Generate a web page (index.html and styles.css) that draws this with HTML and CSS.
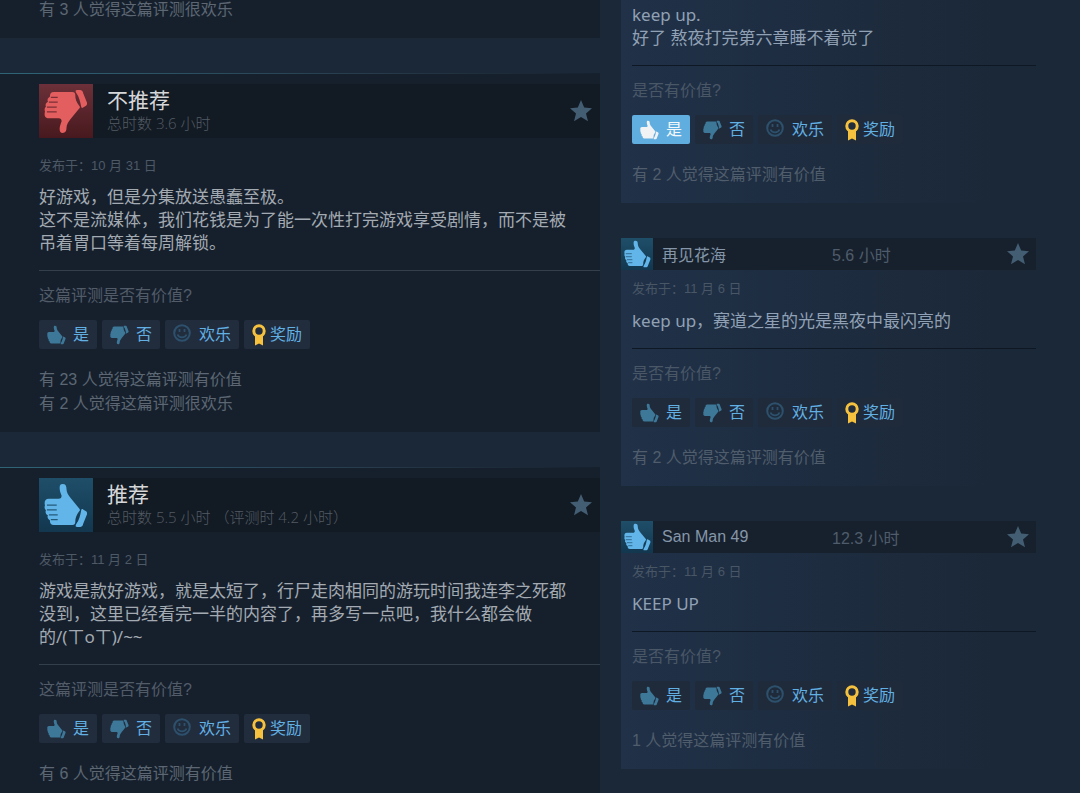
FILE: index.html
```html
<!DOCTYPE html>
<html lang="zh-CN">
<head>
  <meta charset="UTF-8" />
  <title>评测</title>
  <meta name="viewport" content="width=device-width, initial-scale=1" />
  <link rel="stylesheet" href="styles.css">
</head>
<body>

<!-- Shared icons -->
<svg class="sprite" aria-hidden="true">
  <symbol id="thumb" viewBox="4 4 45 46">
    <path d="M20 9c0-3 1-4 3-4 3 0 4 2 4 5 0 4 2 6 4 9l9 11c1 1 1 2 0 3-3 4-4 7-4 11 0 2-1 3-3 3H14c-3 0-4-2-4-5-2-1-3-3-2-5-2-1-3-3-2-5-1-1-2-3-1-5-1-4 0-7 4-7h10c2 0 3-1 3-3-1-3-2-5-2-8z"/>
    <path d="M42 32c0-1 1-2 2-1l3 2c1 1 1 1 1 3l-4 10c0 2-2 3-3 3h-3c-2 0-2-1-1-3 3-4 4-9 5-14z"/>
    <path class="fingers" d="M7 26.500h10M7 31.500h10M9 36.500h9M11 41.500h7"/>
  </symbol>
  <symbol id="smile" viewBox="0 0 18 18">
    <circle cx="9" cy="9" r="7.800" fill="none" stroke="currentColor" stroke-width="2"/>
    <path d="M6.500 5v3M11.500 5v3M4.500 10.500c1.500 3.800 7.500 3.800 9 0" fill="none" stroke="currentColor" stroke-width="1.800"/>
  </symbol>
  <symbol id="award" viewBox="0 0 14 22">
    <path d="M3 12h8v9.500l-4-2-4 2z" fill="currentColor"/>
    <circle class="hole" cx="7" cy="7" r="5.200" stroke="currentColor" stroke-width="3"/>
  </symbol>
  <symbol id="star" viewBox="0 0 22 22">
    <path d="M11 0l3.200 7.600 7.800.6-6 5.200 2 7.800-7-4.200-7 4.200 2-7.800-6-5.200 7.800-.6z"/>
  </symbol>
</svg>

<main class="page">
  <section class="main-col">
    <article class="review review-cut">
      <p class="counts">有 3 人觉得这篇评测很欢乐</p>
    </article>

    <article class="review">
      <header class="review-head">
        <span class="rating rating-down"><svg class="flip"><use href="#thumb"/></svg></span>
        <div class="verdict">
          <h2>不推荐</h2>
          <p class="hours">总时数 3.6 小时</p>
        </div>
        <button class="star" aria-label="收藏"><svg><use href="#star"/></svg></button>
      </header>
      <p class="date">发布于：10 月 31 日</p>
      <p class="content">好游戏，但是分集放送愚蠢至极。<br>这不是流媒体，我们花钱是为了能一次性打完游戏享受剧情，而不是被吊着胃口等着每周解锁。</p>
      <p class="question">这篇评测是否有价值?</p>
      <div class="controls">
        <button class="vote"><svg class="icon-thumb"><use href="#thumb"/></svg>是</button>
        <button class="vote"><svg class="icon-thumb flip"><use href="#thumb"/></svg>否</button>
        <button class="vote funny"><svg class="icon-smile"><use href="#smile"/></svg>欢乐</button>
        <button class="vote award"><svg class="icon-award"><use href="#award"/></svg>奖励</button>
      </div>
      <p class="counts">有 23 人觉得这篇评测有价值<br>有 2 人觉得这篇评测很欢乐</p>
    </article>

    <article class="review">
      <header class="review-head">
        <span class="rating"><svg><use href="#thumb"/></svg></span>
        <div class="verdict">
          <h2>推荐</h2>
          <p class="hours">总时数 5.5 小时 （评测时 4.2 小时）</p>
        </div>
        <button class="star" aria-label="收藏"><svg><use href="#star"/></svg></button>
      </header>
      <p class="date">发布于：11 月 2 日</p>
      <p class="content">游戏是款好游戏，就是太短了，行尸走肉相同的游玩时间我连李之死都没到，这里已经看完一半的内容了，再多写一点吧，我什么都会做<span class="kaomoji">的/(ㄒoㄒ)/~~</span></p>
      <p class="question">这篇评测是否有价值?</p>
      <div class="controls">
        <button class="vote"><svg class="icon-thumb"><use href="#thumb"/></svg>是</button>
        <button class="vote"><svg class="icon-thumb flip"><use href="#thumb"/></svg>否</button>
        <button class="vote funny"><svg class="icon-smile"><use href="#smile"/></svg>欢乐</button>
        <button class="vote award"><svg class="icon-award"><use href="#award"/></svg>奖励</button>
      </div>
      <p class="counts">有 6 人觉得这篇评测有价值</p>
    </article>
  </section>

  <aside class="recent">
    <article class="short short-cut">
      <p class="content">keep up.<br>好了 熬夜打完第六章睡不着觉了</p>
      <p class="question">是否有价值?</p>
      <div class="controls">
        <button class="vote active"><svg class="icon-thumb"><use href="#thumb"/></svg>是</button>
        <button class="vote"><svg class="icon-thumb flip"><use href="#thumb"/></svg>否</button>
        <button class="vote funny"><svg class="icon-smile"><use href="#smile"/></svg>欢乐</button>
        <button class="vote award"><svg class="icon-award"><use href="#award"/></svg>奖励</button>
      </div>
      <p class="counts">有 2 人觉得这篇评测有价值</p>
    </article>

    <article class="short">
      <header class="short-head">
        <span class="rating"><svg><use href="#thumb"/></svg></span>
        <a class="name" href="#">再见花海</a>
        <span class="played">5.6 小时</span>
        <button class="star" aria-label="收藏"><svg><use href="#star"/></svg></button>
      </header>
      <p class="date">发布于：11 月 6 日</p>
      <p class="content">keep up，赛道之星的光是黑夜中最闪亮的</p>
      <p class="question">是否有价值?</p>
      <div class="controls">
        <button class="vote"><svg class="icon-thumb"><use href="#thumb"/></svg>是</button>
        <button class="vote"><svg class="icon-thumb flip"><use href="#thumb"/></svg>否</button>
        <button class="vote funny"><svg class="icon-smile"><use href="#smile"/></svg>欢乐</button>
        <button class="vote award"><svg class="icon-award"><use href="#award"/></svg>奖励</button>
      </div>
      <p class="counts">有 2 人觉得这篇评测有价值</p>
    </article>

    <article class="short">
      <header class="short-head">
        <span class="rating"><svg><use href="#thumb"/></svg></span>
        <a class="name" href="#">San Man 49</a>
        <span class="played">12.3 小时</span>
        <button class="star" aria-label="收藏"><svg><use href="#star"/></svg></button>
      </header>
      <p class="date">发布于：11 月 6 日</p>
      <p class="content">KEEP UP</p>
      <p class="question">是否有价值?</p>
      <div class="controls">
        <button class="vote"><svg class="icon-thumb"><use href="#thumb"/></svg>是</button>
        <button class="vote"><svg class="icon-thumb flip"><use href="#thumb"/></svg>否</button>
        <button class="vote funny"><svg class="icon-smile"><use href="#smile"/></svg>欢乐</button>
        <button class="vote award"><svg class="icon-award"><use href="#award"/></svg>奖励</button>
      </div>
      <p class="counts">1 人觉得这篇评测有价值</p>
    </article>
  </aside>
</main>

</body>
</html>
```
FILE: styles.css
```css
* { box-sizing: border-box; }
body {
  margin: 0;
  background: #1b2838;
  font-family: "Liberation Sans", "Noto Sans CJK SC", sans-serif;
  font-size: 16px;
  color: #56606d;
}
h2, p { margin: 0; font-weight: normal; }
button {
  font: inherit;
  border: none;
  cursor: pointer;
}
svg { display: block; fill: currentColor; }
.sprite { position: absolute; width: 0; height: 0; }
.flip { transform: scaleY(-1); }
.fingers { fill: none; stroke: var(--line); stroke-width: 1.3; }
.hole { fill: #212c3d; }

.page {
  display: grid;
  grid-template-columns: 5fr 4fr;
  height: 100vh;
  overflow: hidden;
}
.main-col, .recent {
  display: flex;
  flex-direction: column;
  gap: 35px;
}
.recent { padding: 0 44px 0 21px; }

/* Full width reviews */
.review {
  flex: none;
  padding: 10px 0 16px 39px;
  background: #16202d;
  border-top: 1px solid;
  border-image: linear-gradient(to right, #2f6577, #273c4d 60%, #16202d) 1;
}
.review-cut {
  margin-top: -2px;
  padding-top: 0;
  border-top: none;
}
.review-head {
  display: flex;
  align-items: center;
  background: #121a23;
}
.rating {
  --line: #235a7a;
  display: flex;
  align-items: center;
  justify-content: center;
  width: 54px;
  height: 54px;
  background: linear-gradient(#1f4e69, #12374f);
  color: #62b5e8;
}
.rating svg { width: 44px; height: 45px; }
.rating-down {
  --line: #7a2f36;
  background: linear-gradient(#6b3039, #47191e);
  color: #e35e5e;
}
.verdict { flex: 1; padding: 0 0 2px 14px; }
.verdict h2 {
  font-family: "Noto Sans CJK SC", sans-serif;
  font-size: 21px;
  line-height: 26px;
  color: #d6d7d8;
}
.hours {
  font-family: "Open Sans", "Noto Sans CJK SC", sans-serif;
  font-size: 15px;
  font-weight: 300;
  line-height: 22px;
  color: #535b64;
}
.star {
  padding: 0;
  margin-right: 8px;
  background: none;
  color: #435d72;
}
.star svg { width: 22px; height: 22px; }

.date {
  font-size: 13px;
  line-height: 20px;
  color: #4e5966;
}
.review .date { padding-top: 18px; }
.content {
  font-family: "Noto Sans", "Noto Sans CJK SC", sans-serif;
  font-size: 17px;
  line-height: 23px;
}
.review .content {
  padding: 9px 30px 16px 0;
  color: #a3aab1;
}
.kaomoji { white-space: nowrap; }
.question {
  padding-top: 13px;
  line-height: 24px;
  border-top: 1px solid #343f4c;
}
.review .question { color: #525c69; }

.controls {
  display: flex;
  gap: 5px;
  padding: 12px 0 19px;
}
.vote {
  --line: transparent;
  display: flex;
  align-items: center;
  gap: 7px;
  height: 29px;
  padding: 0 8px 3px;
  border-radius: 2px;
  background: #212c3d;
  color: #62b0e3;
}
.icon-thumb {
  width: 19px;
  height: 20px;
  color: #3e7899;
}
.vote svg { margin-top: 3px; }
.icon-smile {
  width: 18px;
  height: 18px;
  color: #2d516c;
}
.funny { gap: 8px; }
.vote .icon-smile { margin-top: 0; }
.award { gap: 4px; }
.icon-award {
  width: 14px;
  height: 22px;
  color: #f5c13e;
}
.counts { line-height: 24px; color: #5c6773; }

/* Recent reviews */
.short {
  flex: none;
  padding-bottom: 16px;
  background: linear-gradient(to right, #203148, #1b2838 90%);
}
.short-cut { padding-top: 3px; }
.short-head {
  display: grid;
  grid-template-columns: 32px 1fr 1fr auto;
  align-items: center;
  background: #17212d;
}
.short .rating { width: 32px; height: 32px; }
.short .rating svg { width: 27px; height: 28px; }
.short .star { margin-right: 7px; }
.name {
  padding-left: 9px;
  color: #8596a9;
  text-decoration: none;
}
.played { padding-left: 2px; color: #4f5c6b; }
.short > p, .short .controls { margin-left: 11px; }
.short .date { padding-top: 9px; color: #485666; }
.short .content {
  padding: 10px 0 16px;
  color: #91a1b5;
}
.short-cut .content { padding-top: 0; }
.short .question { border-color: #0e1824; color: #4a5767; }
.short .vote { background: #1f2b3b; }
.short .vote.active { background: #60addf; color: #f4f8fb; }
.short .active .icon-thumb { color: #f0f2f4; }
.short .counts { color: #505d6c; }
```
